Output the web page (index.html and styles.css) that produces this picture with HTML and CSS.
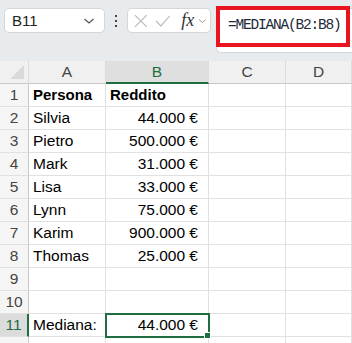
FILE: index.html
```html
<!DOCTYPE html>
<html lang="it">
<head>
    <meta charset="UTF-8">
    <title>Mediana</title>
    <link rel="stylesheet" href="styles.css">
</head>
<body>
    <div class="toolbar">
        <div class="namebox">
            <span>B11</span>
            <svg width="12" height="8" viewBox="0 0 12 8"><path d="M1.5 2 L6 6 L10.5 2" fill="none" stroke="#555" stroke-width="1.2"/></svg>
        </div>
        <div class="dots"><i></i><i></i><i></i></div>
        <div class="fxbox">
            <svg width="14" height="14" viewBox="0 0 14 14"><path d="M1 1 L13 13 M13 1 L1 13" stroke="#b9b9b9" stroke-width="1.2" fill="none"/></svg>
            <svg width="16" height="14" viewBox="0 0 16 14"><path d="M1 7 L6 12 L15 2" stroke="#b9b9b9" stroke-width="1.2" fill="none"/></svg>
            <span class="fx">fx</span>
            <svg width="9" height="6" viewBox="0 0 9 6"><path d="M1 1.5 L4.5 4.5 L8 1.5" fill="none" stroke="#999" stroke-width="1"/></svg>
        </div>
        <div class="formula">
            <span>=MEDIANA(B2:B8)</span>
            <div class="highlight"></div>
        </div>
    </div>

    <div class="sheet">
        <div class="corner"><div class="tri"></div></div>
        <div class="colhead">A</div>
        <div class="colhead active">B</div>
        <div class="colhead">C</div>
        <div class="colhead">D</div>

        <div class="rowhead">1</div><div class="cell bold">Persona</div><div class="cell bold">Reddito</div><div class="cell"></div><div class="cell"></div>
        <div class="rowhead">2</div><div class="cell">Silvia</div><div class="cell num">44.000 €</div><div class="cell"></div><div class="cell"></div>
        <div class="rowhead">3</div><div class="cell">Pietro</div><div class="cell num">500.000 €</div><div class="cell"></div><div class="cell"></div>
        <div class="rowhead">4</div><div class="cell">Mark</div><div class="cell num">31.000 €</div><div class="cell"></div><div class="cell"></div>
        <div class="rowhead">5</div><div class="cell">Lisa</div><div class="cell num">33.000 €</div><div class="cell"></div><div class="cell"></div>
        <div class="rowhead">6</div><div class="cell">Lynn</div><div class="cell num">75.000 €</div><div class="cell"></div><div class="cell"></div>
        <div class="rowhead">7</div><div class="cell">Karim</div><div class="cell num">900.000 €</div><div class="cell"></div><div class="cell"></div>
        <div class="rowhead">8</div><div class="cell">Thomas</div><div class="cell num">25.000 €</div><div class="cell"></div><div class="cell"></div>
        <div class="rowhead">9</div><div class="cell"></div><div class="cell"></div><div class="cell"></div><div class="cell"></div>
        <div class="rowhead">10</div><div class="cell"></div><div class="cell"></div><div class="cell"></div><div class="cell"></div>
        <div class="rowhead active">11</div><div class="cell">Mediana:</div><div class="cell num selected">44.000 €<span class="handle"></span></div><div class="cell"></div><div class="cell"></div>
        <div class="rowhead"></div><div class="cell"></div><div class="cell"></div><div class="cell"></div><div class="cell"></div>
    </div>
</body>
</html>
```

FILE: styles.css
```css
body {
    margin: 0;
    width: 352px;
    height: 343px;
    overflow: hidden;
    font-family: "Liberation Sans", Arial, sans-serif;
    background-color: white;
}

.toolbar {
    height: 61px;
    box-sizing: border-box;
    padding: 8px 0 0 4px;
    background-color: #e8ebee;
    display: flex;
    align-items: flex-start;
}

.namebox {
    width: 101px;
    height: 25px;
    box-sizing: border-box;
    background-color: white;
    border: 1px solid #d4d6d9;
    border-radius: 5px;
    display: flex;
    align-items: center;
    justify-content: space-between;
    padding: 0 9px 0 7px;
    font-size: 15px;
    color: #222;
}

.dots {
    width: 22px;
    height: 25px;
    display: flex;
    flex-direction: column;
    align-items: center;
    justify-content: center;
    gap: 3px;
}

.dots i {
    width: 2px;
    height: 2px;
    background-color: #444;
}

.fxbox {
    width: 84px;
    height: 25px;
    box-sizing: border-box;
    background-color: white;
    border: 1px solid #d4d6d9;
    border-radius: 5px;
    display: flex;
    align-items: center;
    padding: 0 3px 0 6px;
    gap: 7px;
}

.fx {
    font-family: "Liberation Serif", "Times New Roman", serif;
    font-style: italic;
    font-size: 18px;
    color: #333;
    margin-left: 4px;
    margin-right: -3px;
}

.formula {
    position: relative;
    flex: 1;
    height: 45px;
    margin-left: 5px;
    box-sizing: border-box;
    background-color: white;
    border: 1px solid #d4d6d9;
    border-right: none;
    border-radius: 0 0 0 5px;
    padding: 8px 0 0 11px;
    font-family: "Liberation Mono", "Courier New", monospace;
    font-size: 14.5px;
    letter-spacing: -1.2px;
    color: #1f2a3a;
}

.highlight {
    position: absolute;
    top: -3px;
    left: -1px;
    right: 2px;
    height: 41px;
    box-sizing: border-box;
    border: 4px solid #e8141f;
}

.sheet {
    display: grid;
    grid-template-columns: 29px 77px 103px 77px 66px;
    grid-auto-rows: 23px;
    font-size: 15.5px;
}

.corner,
.colhead {
    background-color: #f0f0f0;
    border-right: 1px solid #dcdcdc;
    border-bottom: 1px solid #c8c8c8;
    box-sizing: border-box;
}

.corner {
    position: relative;
}

.tri {
    position: absolute;
    right: 4px;
    bottom: 4px;
    width: 0;
    height: 0;
    border-left: 14px solid transparent;
    border-bottom: 14px solid #dadada;
}

.colhead {
    text-align: center;
    line-height: 22px;
    color: #444;
}

.colhead.active {
    background-color: #dfdfdf;
    border-bottom: 2px solid #1e6e42;
    color: #1e6e42;
}

.rowhead {
    background-color: #f5f5f5;
    border-right: 1px solid #c8c8c8;
    border-bottom: 1px solid #e1e1e1;
    box-sizing: border-box;
    text-align: center;
    line-height: 22px;
    color: #444;
}

.rowhead.active {
    background-color: #dcdcdc;
    border-right: 2px solid #1e6e42;
    color: #1e6e42;
}

.cell {
    border-right: 1px solid #e1e1e1;
    border-bottom: 1px solid #e1e1e1;
    box-sizing: border-box;
    padding: 0 4px;
    line-height: 22px;
    color: #000;
    white-space: nowrap;
}

.bold {
    font-weight: bold;
    font-size: 15px;
}

.num {
    text-align: right;
    padding-right: 10px;
}

.selected {
    position: relative;
    outline: 2px solid #1e6e42;
    outline-offset: -1px;
}

.handle {
    position: absolute;
    right: -3px;
    bottom: -3px;
    width: 5px;
    height: 5px;
    background-color: #1e6e42;
    border: 1px solid white;
}
```
